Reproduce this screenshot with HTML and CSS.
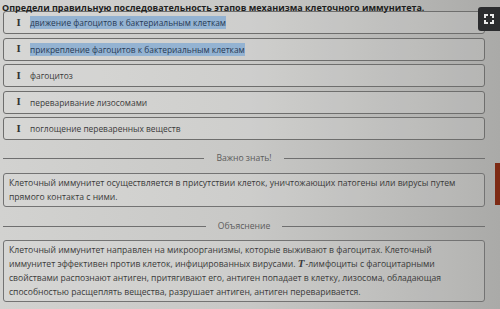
FILE: index.html
```html
<!DOCTYPE html>
<html lang="ru">
<head>
    <meta charset="UTF-8">
    <meta name="viewport" content="width=device-width, initial-scale=1.0">
    <title>Клеточный иммунитет</title>
    <link rel="stylesheet" href="styles.css">
</head>
<body>
    <div class="page">
        <div class="head">
            <h1 class="title">Определи правильную последовательность этапов механизма клеточного иммунитета.</h1>
            <button class="close">
                <svg width="12" height="12" viewBox="0 0 12 12">
                    <path d="M1 1h4v2H3v2H1zM11 1H7v2h2v2h2zM1 11h4V9H3V7H1zM11 11H7V9h2V7h2z" fill="#e8e8e8"/>
                </svg>
            </button>
        </div>

        <ul class="items">
            <li class="item"><span class="grip">I</span><span class="txt sel">движение фагоцитов к бактериальным клеткам</span></li>
            <li class="item"><span class="grip">I</span><span class="txt sel">прикрепление фагоцитов к бактериальным клеткам</span></li>
            <li class="item"><span class="grip">I</span><span class="txt">фагоцитоз</span></li>
            <li class="item"><span class="grip">I</span><span class="txt">переваривание лизосомами</span></li>
            <li class="item"><span class="grip">I</span><span class="txt">поглощение переваренных веществ</span></li>
        </ul>

        <div class="divider first"><span>Важно знать!</span></div>
        <div class="note">
            <p>Клеточный иммунитет осуществляется в присутствии клеток, уничтожающих патогены или вирусы путем прямого контакта с ними.</p>
            <div class="tab"></div>
        </div>

        <div class="divider"><span>Объяснение</span></div>
        <div class="note">
            <p>Клеточный иммунитет направлен на микроорганизмы, которые выживают в фагоцитах. Клеточный иммунитет эффективен против клеток, инфицированных вирусами. <i class="t">T</i>-лимфоциты с фагоцитарными свойствами распознают антиген, притягивают его, антиген попадает в клетку, лизосома, обладающая способностью расщеплять вещества, разрушает антиген, антиген переваривается.</p>
        </div>
    </div>
</body>
</html>
```

FILE: styles.css
```css
body {
    margin: 0;
    padding: 0;
    font-family: "Open Sans", Arial, sans-serif;
    color: #2f2f2f;
    background: linear-gradient(90deg, #d2d2d0 0%, #c8c8c6 50%, #aaaaa8 100%);
    overflow: hidden;
}
.page {
    padding: 0 15px 0 3px;
}
.head {
    display: flex;
    align-items: flex-start;
    height: 11px;
}
.title {
    margin: 2px 0 0 -1px;
    font-size: 9px;
    font-weight: 700;
    color: #1e1e1e;
    line-height: 11px;
    flex: 1;
    position: relative;
    z-index: 1;
}
.close {
    position: absolute;
    top: 7px;
    right: 0;
    width: 22px;
    height: 24px;
    padding: 0;
    border: none;
    border-radius: 3px 0 0 3px;
    background: #2b2c2e;
    display: flex;
    align-items: center;
    justify-content: center;
    z-index: 2;
}
.items {
    list-style: none;
    margin: 0;
    padding: 0;
    display: flex;
    flex-direction: column;
    gap: 3.5px;
}
.item {
    display: flex;
    align-items: center;
    height: 21px;
    border: 1px solid #6e6e6d;
    border-radius: 3px;
    background: rgba(255, 255, 255, 0.12);
    font-size: 8.4px;
}
.grip {
    width: 7px;
    margin: 0 8px 0 11px;
    font-family: "DejaVu Serif", serif;
    font-weight: 700;
    font-size: 9px;
    color: #333;
    text-align: center;
}
.txt {
    color: #3a3a3a;
}
.sel {
    background: #94b3d2;
    color: #283a55;
    padding: 1px 0;
}
.divider {
    display: flex;
    align-items: center;
    gap: 12px;
    height: 12px;
    margin: 13px 0 8px;
    font-size: 8.6px;
    color: #5b5b5b;
}
.divider.first {
    margin: 12px 0 9px;
}
.divider::before, .divider::after {
    content: "";
    flex: 1;
    height: 1px;
    background: #6f6f6f;
}
.note {
    border: 1px solid #737373;
    border-radius: 3px;
    background: rgba(255, 255, 255, 0.1);
    padding: 2px 8px 2px 5px;
    font-size: 8.6px;
    line-height: 14px;
    color: #3a3a3a;
}
.note p {
    margin: 0;
}
.t {
    display: inline-block;
    font-family: "Liberation Serif", serif;
    font-size: 11px;
    line-height: 10px;
    font-weight: 700;
    margin-right: 1px;
}
.tab {
    position: absolute;
    right: 0;
    top: 163px;
    width: 5px;
    height: 42px;
    background: #7d2a14;
}
```
